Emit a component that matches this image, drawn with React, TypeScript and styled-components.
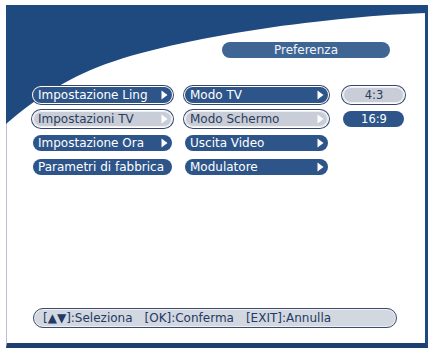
import styled, { createGlobalStyle, css } from "styled-components";

const GlobalStyle = createGlobalStyle`
  html, body {
    margin: 0;
    padding: 0;
    background: #ffffff;
  }
  body {
    font-family: "DejaVu Sans", "Liberation Sans", sans-serif;
  }
`;

const Screen = styled.div`
  width: 431px;
  height: 348px;
  overflow: hidden;
  background: #ffffff;
  padding-top: 5px;
  box-sizing: border-box;
`;

const Frame = styled.div`
  position: relative;
  margin-left: 6px;
  width: 422px;
  height: 343px;
  box-sizing: border-box;
  border-left: 1px solid #b9c1cf;
  border-right: 3px solid #1f4a7f;
  border-bottom: 5px solid #1c3f6f;
  display: flex;
  flex-direction: column;
  padding: 37px 0 15px 26px;
`;

const Wave = styled.svg`
  position: absolute;
  left: -1px;
  top: 0;
  width: 422px;
  height: 130px;
  pointer-events: none;
`;

const HeaderRow = styled.div`
  position: relative;
  display: flex;
  justify-content: flex-end;
  padding-right: 35px;
`;

const HeaderPill = styled.div`
  width: 168px;
  height: 16px;
  border-radius: 8px;
  background: #3f6595;
  color: #f2f5fa;
  font-size: 12px;
  line-height: 16px;
  text-align: center;
`;

const Menu = styled.div`
  position: relative;
  margin-top: 29px;
  display: grid;
  grid-template-columns: 139px 143px 63px;
  grid-auto-rows: 16px;
  column-gap: 13px;
  row-gap: 8px;
`;

type PillState = "normal" | "path" | "focus";

const Pill = styled.div<{ $state: PillState; $center?: boolean }>`
  position: relative;
  display: flex;
  align-items: center;
  justify-content: ${(p) => (p.$center ? "center" : "space-between")};
  padding: 0 4px 0 5px;
  border-radius: 8px;
  background: #2d5589;
  color: #ffffff;
  font-size: 12px;
  line-height: 16px;
  white-space: nowrap;
  ${(p) =>
    p.$state === "path" &&
    css`
      box-shadow: 0 0 0 1px #ffffff, 0 0 0 2px #33466a;
    `}
  ${(p) =>
    p.$state === "focus" &&
    css`
      background: #c9cdd7;
      color: #2a3c5c;
      box-shadow: inset 0 0 0 1px #eef0f4, 0 0 0 1px #ffffff, 0 0 0 2px #33466a;
    `}
`;

const ValuePill = styled(Pill)`
  margin-left: 2px;
  width: 61px;
  box-sizing: border-box;
  font-size: 11.5px;
`;

const Arrow = styled.svg`
  flex: none;
  width: 7px;
  height: 10px;
`;

const Spacer = styled.div``;

const HelpBar = styled.div`
  margin-top: auto;
  width: 364px;
  height: 20px;
  box-sizing: border-box;
  border: 1px solid #3b4c6e;
  border-radius: 10px;
  background: #d3d7df;
  box-shadow: inset 0 0 0 1px #eef0f4;
  color: #213a66;
  font-size: 12px;
  line-height: 18px;
  padding-left: 9px;
  white-space: nowrap;
`;

const Gap = styled.span`
  display: inline-block;
  width: 12px;
`;

function ArrowIcon() {
  return (
    <Arrow viewBox="0 0 7 10">
      <path d="M0.5 0.5 L6.5 5 L0.5 9.5 Z" fill="#ffffff" />
    </Arrow>
  );
}

function MenuPill({ label, state, arrow }: { label: string; state: PillState; arrow?: boolean }) {
  return (
    <Pill $state={state}>
      <span>{label}</span>
      {arrow && <ArrowIcon />}
    </Pill>
  );
}

export default function App() {
  return (
    <>
      <GlobalStyle />
      <Screen>
        <Frame>
          <Wave viewBox="0 0 422 130">
            <path
              d="M0 0 H422 V8 C330 11 175 30 92 62 C52 78 22 100 0 119 Z"
              fill="#1f4a7f"
            />
          </Wave>

          <HeaderRow>
            <HeaderPill>Preferenza</HeaderPill>
          </HeaderRow>

          <Menu>
            <MenuPill label="Impostazione Ling" state="path" arrow />
            <MenuPill label="Modo TV" state="path" arrow />
            <ValuePill $state="focus" $center>4:3</ValuePill>

            <MenuPill label="Impostazioni TV" state="focus" arrow />
            <MenuPill label="Modo Schermo" state="focus" arrow />
            <ValuePill $state="normal" $center>16:9</ValuePill>

            <MenuPill label="Impostazione Ora" state="normal" arrow />
            <MenuPill label="Uscita Video" state="normal" arrow />
            <Spacer />

            <MenuPill label="Parametri di fabbrica" state="normal" />
            <MenuPill label="Modulatore" state="normal" arrow />
            <Spacer />
          </Menu>

          <HelpBar>
            [▲▼]:Seleziona<Gap />[OK]:Conferma<Gap />[EXIT]:Annulla
          </HelpBar>
        </Frame>
      </Screen>
    </>
  );
}
